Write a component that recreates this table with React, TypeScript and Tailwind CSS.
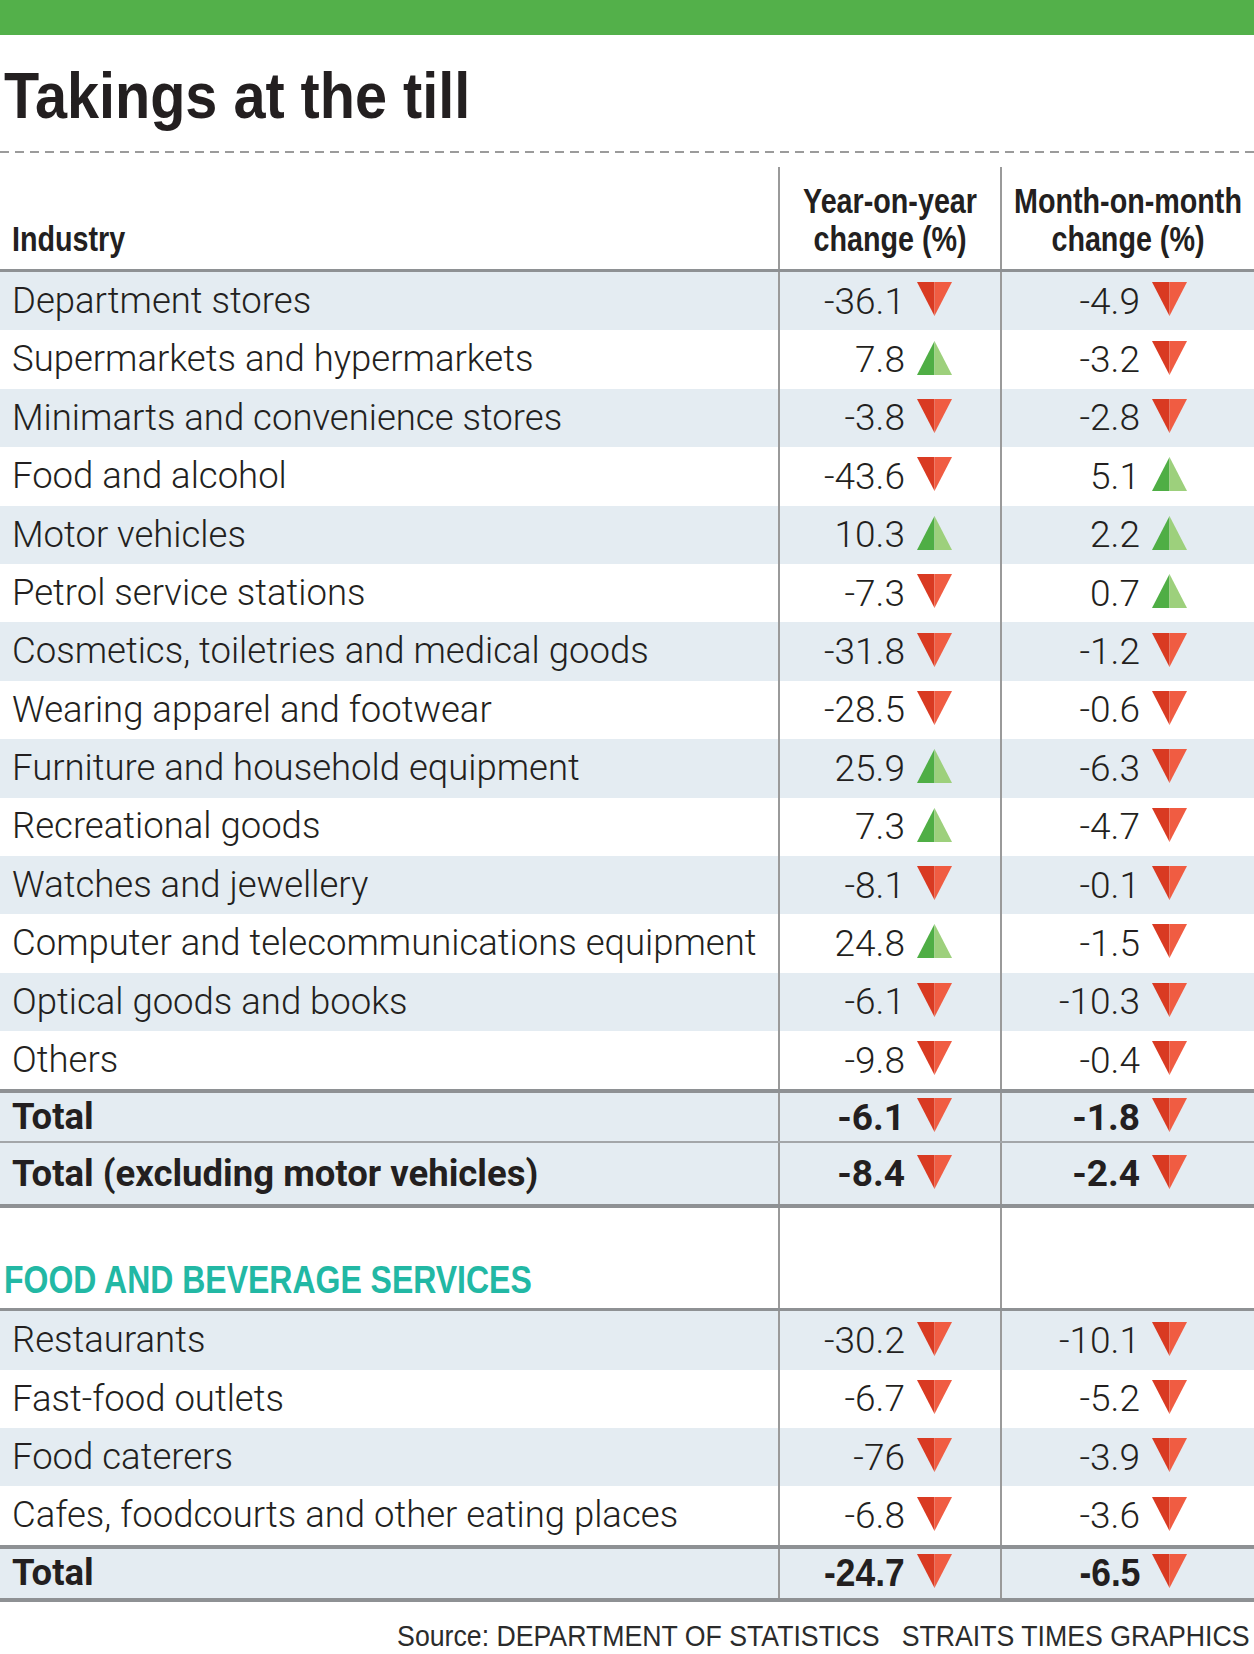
import React from "react";

type Dir = "up" | "down";
type Row = [string, string, Dir, string, Dir];

const retail: Row[] = [
  ["Department stores", "-36.1", "down", "-4.9", "down"],
  ["Supermarkets and hypermarkets", "7.8", "up", "-3.2", "down"],
  ["Minimarts and convenience stores", "-3.8", "down", "-2.8", "down"],
  ["Food and alcohol", "-43.6", "down", "5.1", "up"],
  ["Motor vehicles", "10.3", "up", "2.2", "up"],
  ["Petrol service stations", "-7.3", "down", "0.7", "up"],
  ["Cosmetics, toiletries and medical goods", "-31.8", "down", "-1.2", "down"],
  ["Wearing apparel and footwear", "-28.5", "down", "-0.6", "down"],
  ["Furniture and household equipment", "25.9", "up", "-6.3", "down"],
  ["Recreational goods", "7.3", "up", "-4.7", "down"],
  ["Watches and jewellery", "-8.1", "down", "-0.1", "down"],
  ["Computer and telecommunications equipment", "24.8", "up", "-1.5", "down"],
  ["Optical goods and books", "-6.1", "down", "-10.3", "down"],
  ["Others", "-9.8", "down", "-0.4", "down"],
];

const fnb: Row[] = [
  ["Restaurants", "-30.2", "down", "-10.1", "down"],
  ["Fast-food outlets", "-6.7", "down", "-5.2", "down"],
  ["Food caterers", "-76", "down", "-3.9", "down"],
  ["Cafes, foodcourts and other eating places", "-6.8", "down", "-3.6", "down"],
];

// no condensed family is installed, so Liberation Sans gets squeezed horizontally
const arial = "font-['Liberation_Sans',Arial,sans-serif]";
const body = "font-['Roboto','Liberation_Sans',sans-serif]";
const cols = "grid grid-cols-[778px_222px_minmax(0,1fr)]";

function Arrow({ dir }: { dir: Dir }) {
  if (dir === "up") {
    return (
      <svg width="35" height="34" viewBox="0 0 35 34" className="shrink-0 -mt-1">
        <polygon points="17.5,0 0,34 17.5,34" fill="#4fae45" />
        <polygon points="17.5,0 35,34 17.5,34" fill="#9dd07c" />
      </svg>
    );
  }
  return (
    <svg width="35" height="34" viewBox="0 0 35 34" className="shrink-0 -mt-1">
      <polygon points="0,0 17.5,0 17.5,34" fill="#d93a22" />
      <polygon points="17.5,0 35,0 17.5,34" fill="#f05c42" />
    </svg>
  );
}

function Value({ v, dir, bold, cond }: { v: string; dir: Dir; bold?: boolean; cond?: boolean }) {
  return (
    <div className="flex items-center gap-3">
      {cond ? (
        <span className={`${arial} font-bold text-[38px] leading-none inline-block scale-x-[0.93] origin-right`}>{v}</span>
      ) : (
        <span className={`${body} ${bold ? "font-bold" : "font-light"} text-[37px] leading-none`}>{v}</span>
      )}
      <Arrow dir={dir} />
    </div>
  );
}

function DataRow({ row, shaded, bold, cond, tall }: { row: Row; shaded: boolean; bold?: boolean; cond?: boolean; tall: string }) {
  const [label, yoy, yd, mom, md] = row;
  return (
    <div className={`${cols} ${tall} ${shaded ? "bg-[#e4ecf2]" : "bg-white"}`}>
      <div className={`flex items-center pl-3 ${body} ${bold ? "font-bold" : "font-light"} text-[36.5px] leading-none whitespace-nowrap`}>
        {label}
      </div>
      <div className="flex items-center justify-end pr-[48px] border-l-2 border-[#9a9a9a]">
        <Value v={yoy} dir={yd} bold={bold} cond={cond} />
      </div>
      <div className="flex items-center justify-end pr-[67px] border-l-2 border-[#9a9a9a]">
        <Value v={mom} dir={md} bold={bold} cond={cond} />
      </div>
    </div>
  );
}

export default function App() {
  return (
    <div className="w-[1254px] bg-white text-[#231f20] overflow-hidden">
      <div className="h-[35px] bg-[#53b04a]" />
      <div className="h-[116px] pl-1 pt-[30px]">
        <h1 className={`${arial} font-bold text-[64px] leading-[62px] inline-block whitespace-nowrap scale-x-[0.9] origin-left`}>
          Takings at the till
        </h1>
      </div>
      <div className="h-[2px] bg-[repeating-linear-gradient(90deg,#9b9b9b_0_9px,transparent_9px_15px)]" />
      <div className="h-[14px]" />

      <div className={`${cols} h-[102px] ${arial} font-bold text-[35px] leading-[38px]`}>
        <div className="flex items-end pl-3 pb-[11px]">
          <span className="inline-block scale-x-[0.82] origin-left">Industry</span>
        </div>
        <div className="flex items-end justify-center pb-[11px] border-l-2 border-[#9a9a9a]">
          <span className="inline-block shrink-0 whitespace-nowrap text-center scale-x-[0.82]">
            Year-on-year
            <br />
            change (%)
          </span>
        </div>
        <div className="flex items-end justify-center pb-[11px] border-l-2 border-[#9a9a9a]">
          <span className="inline-block shrink-0 whitespace-nowrap text-center scale-x-[0.82]">
            Month-on-month
            <br />
            change (%)
          </span>
        </div>
      </div>
      <div className="h-[3px] bg-[#8e9194]" />

      {retail.map((r, i) => (
        <DataRow key={r[0]} row={r} shaded={i % 2 === 0} tall="h-[58.4px]" />
      ))}
      <div className="h-[4px] bg-[#8e9194]" />
      <DataRow row={["Total", "-6.1", "down", "-1.8", "down"]} shaded bold tall="h-[48px]" />
      <div className="h-[2px] bg-[#a3a6a9]" />
      <DataRow row={["Total (excluding motor vehicles)", "-8.4", "down", "-2.4", "down"]} shaded bold tall="h-[61px]" />
      <div className="h-[4px] bg-[#8e9194]" />

      <div className={`${cols} h-[100px]`}>
        <div className={`flex items-end pl-1 pb-[9px] ${arial} font-bold text-[39px] leading-none text-[#22b8a4]`}>
          <span className="inline-block whitespace-nowrap scale-x-[0.82] origin-left">FOOD AND BEVERAGE SERVICES</span>
        </div>
        <div className="border-l-2 border-[#9a9a9a]" />
        <div className="border-l-2 border-[#9a9a9a]" />
      </div>
      <div className="h-[3px] bg-[#8e9194]" />

      {fnb.map((r, i) => (
        <DataRow key={r[0]} row={r} shaded={i % 2 === 0} tall="h-[58.3px]" />
      ))}
      <div className="h-[4px] bg-[#8e9194]" />
      <DataRow row={["Total", "-24.7", "down", "-6.5", "down"]} shaded bold cond tall="h-[49px]" />
      <div className="h-[4px] bg-[#8e9194]" />

      <div className={`h-[52px] pt-[20px] pr-1 text-right ${arial} text-[29px] leading-none text-[#2b2b2b]`}>
        <span className="inline-block whitespace-pre scale-x-[0.92] origin-right">
          {"Source: DEPARTMENT OF STATISTICS   STRAITS TIMES GRAPHICS"}
        </span>
      </div>
    </div>
  );
}
